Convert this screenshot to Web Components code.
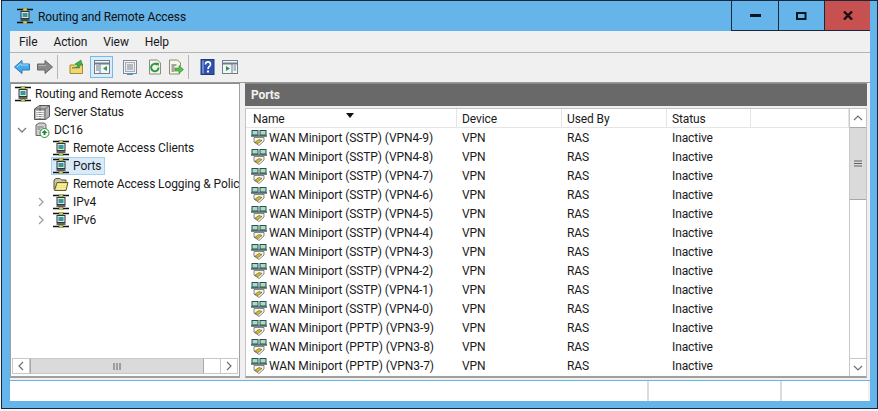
<!DOCTYPE html>
<html><head><meta charset="utf-8"><title>Routing and Remote Access</title>
<style>
html,body{margin:0;height:411px;overflow:hidden;background:#f4f4f4;font:12px/16px Roboto,"Noto Sans",sans-serif;letter-spacing:-.1px;color:#1a1a1a}
</style></head><body>
<app-window>
  <title-bar slot="title">Routing and Remote Access</title-bar>
  <menu-bar></menu-bar>
  <tool-bar></tool-bar>
  <main-area></main-area>
  <status-bar></status-bar>
</app-window>
<script>
const ICONS={
net:`<path d="M0 1.5h16M0 14.5h16" stroke="#111" stroke-width="1.4"/><rect x="6" y="0" width="4" height="3" fill="#c9d84a" stroke="#556"  stroke-width=".5"/><rect x="6" y="13" width="4" height="3" fill="#c9d84a" stroke="#556" stroke-width=".5"/><rect x="4" y="3.500" width="8" height="7" fill="#dfe5e5" stroke="#333" stroke-width="1"/><rect x="5.500" y="5" width="5" height="4" fill="#2f9c9c"/><path d="M3.500 12h9" stroke="#333" stroke-width="1.500"/>`,
wan:`<rect x="1" y="0.500" width="6" height="4.500" fill="#a7dcc8" stroke="#2c4f4f"/><rect x="9" y="0.500" width="6" height="4.500" fill="#a7dcc8" stroke="#2c4f4f"/><path d="M0 6h16" stroke="#26484a" stroke-width="1.300"/><path d="M3 7.500h10v3.500l-5 4.500-5-3.500z" fill="#f4f4ea" stroke="#555" stroke-width=".7"/><path d="M3.500 12.500l4.500-3 3 1-4 3z" fill="#d6bf2f" stroke="#5c5520" stroke-width=".6"/>`,
server:`<path d="M.5 5l5-3.500h10v11l-4 3H.5z" fill="#b4b4b4" stroke="#555"/><path d="M6 1.500v14M11 5v10.500M.5 5h10.500l4.500-3.500" fill="none" stroke="#555" stroke-width=".8"/><path d="M2 7.500h8M2 9.500h8M2 11.500h8M2 13.500h8" stroke="#f4f4f4"/>`,
dc:`<path d="M2 3l3-2h5l2 1.500v5H7.500v6H2z" fill="#cfcfcf" stroke="#666"/><path d="M3.500 5h6M3.500 7h3" stroke="#777"/><circle cx="10.500" cy="11" r="4.500" fill="#fff" stroke="#2e8b3d"/><path d="M10.500 8l3 3h-2v2h-2v-2h-2z" fill="#1e8a33"/>`,
folder:`<path d="M1 13.500V4l2-1.500h4L8.500 4H13v2" fill="#c9c8a8" stroke="#55533a"/><path d="M1.500 14.500l2.500-8h11l-2 8z" fill="#ecdf6c" stroke="#5f5c34"/><path d="M4.500 8.500h9M4 10.500h9M3.500 12.500h9" stroke="#f7f2b0"/>`,
back:`<path d="M0.500 8L8 1.500V5h7.500v6H8v3.500z" fill="#47a9e8" stroke="#2a78b6"/><path d="M3 8l4-3.500V6h7.500" fill="none" stroke="#a5dcfa"/>`,
fwd:`<path d="M15.500 8L8 1.500V5H0.500v6H8v3.500z" fill="#8a8a8a" stroke="#666"/><path d="M1.500 6.500H9" stroke="#b5b5b5"/>`,
up:`<path d="M1 14.500V6h5l1-1h6.500v9.500z" fill="#f2d673" stroke="#a68b34"/><path d="M3 9l5-1 .5-2.500L6 5l6-4 1.500 5.500L11 6 10.500 9z" fill="#3fae49" stroke="#27792f" stroke-width=".5"/>`,
tree:`<rect x="0.500" y="1.500" width="15" height="13" fill="#f4f6f8" stroke="#6e7f8c"/><path d="M1 4.500h14" stroke="#6e7f8c" stroke-width="2"/><path d="M6 5v9" stroke="#6e7f8c"/><path d="M2 7h3M2 9h3M2 11h3" stroke="#6e7f8c"/><path d="M13 7v5l-4-2.500z" fill="#2a9a4a"/>`,
props:`<rect x="1.500" y="1.500" width="13" height="13" fill="#f4f4f4" stroke="#7c8b96"/><rect x="3.500" y="3.500" width="9" height="9" fill="#e8ecee" stroke="#aab"/><path d="M5 6h6M5 8h6M5 10h6" stroke="#7c8b96"/><path d="M5 15.500h6" stroke="#3aa0d8"/>`,
refresh:`<path d="M2.500 1h8l3 3v11h-11z" fill="#f5f5f0" stroke="#8c8c80"/><path d="M11.500 8.500a3.700 3.700 0 1 1-1.200-2.700" fill="none" stroke="#2c9a3c" stroke-width="2"/><path d="M8.500 3.500l3.500.5-.5 3.500z" fill="#2c9a3c"/>`,
export:`<path d="M1.500 1h8l3 3v3h-1v8h-10z" fill="#f7f6ea" stroke="#8c8c70"/><path d="M3.500 6h5M3.500 8h3M3.500 10h3M3.500 12h3" stroke="#555"/><path d="M7 9h4V6.500L15.500 10.500 11 14.500V12H7z" fill="#52c04a" stroke="#2f8a2c" stroke-width=".6"/>`,
help:`<rect x="1" y="0.500" width="13" height="15" fill="#3052a8" stroke="#1f3a80"/><rect x="2" y="1.500" width="2" height="13" fill="#6c88cf"/><path d="M5.500 5.500c0-3.500 5-3.500 5 0 0 2-2.500 2-2.500 4.500" fill="none" stroke="#fff" stroke-width="1.600"/><rect x="7" y="11.500" width="2" height="2" fill="#fff"/>`,
action:`<rect x="0.500" y="1.500" width="15" height="13" fill="#f4f6f8" stroke="#6e7f8c"/><path d="M1 4.500h14" stroke="#6e7f8c" stroke-width="2"/><path d="M10 5v9" stroke="#6e7f8c"/><path d="M11.500 7h2.500M11.500 9h2.500M11.500 11h2.500" stroke="#6e7f8c"/><path d="M4 7v5l4-2.500z" fill="#2a9a4a"/>`
};

function def(name,css,html,init){
  customElements.define(name,class extends HTMLElement{
    constructor(){super();this.attachShadow({mode:'open'}).innerHTML=`<style>${css}</style>`+(typeof html==='function'?html(this):html);}
    connectedCallback(){init&&init(this)}
  });
}
def('app-icon',':host{display:inline-flex;width:16px;height:16px;flex:none}svg{display:block}','',el=>{
  el.shadowRoot.innerHTML+=`<svg width="16" height="16" viewBox="0 0 16 16">${ICONS[el.getAttribute('name')]}</svg>`;
});
def('app-window',`:host{display:flex;flex-direction:column;box-sizing:border-box;margin-left:1px;width:877px;height:409px;border:1px solid #17273d;background:#65b5ea;padding:0 7px 7px 8px}`,'<slot name="title"></slot><slot></slot>');
def('title-bar',`:host{display:flex;height:30px;flex:none;align-items:center;padding-left:7px}
.t{margin-left:5px;color:#101010;padding-top:1px}
.btns{margin-left:auto;display:flex;align-self:stretch;box-sizing:border-box;height:30px;border-bottom:1px solid #17273d}
.b{width:46px;display:flex;align-items:center;justify-content:center;border-left:1px solid #17273d;box-sizing:border-box}
.c{background:#c75050}
.b svg{display:block}`,`<app-icon name="net"></app-icon><span class="t"><slot></slot></span><div class="btns"><div class="b" style="width:47px"><svg width="12" height="4"><rect x="1" width="11" height="3" fill="#0b1526"/></svg></div><div class="b"><svg width="11" height="8"><rect x="1" y="1" width="8.500" height="6" fill="none" stroke="#0b1526" stroke-width="2"/></svg></div><div class="b c"><svg width="10" height="9" viewBox="0 0 10 9"><path d="M1 .5l8 8M9 .5l-8 8" stroke="#1a0d0d" stroke-width="2.400"/></svg></div></div>`);
def('menu-bar',`:host{display:flex;height:22px;flex:none;box-sizing:border-box;background:#f0f0f0;border-bottom:1px solid #b4b4b4;padding:1px 0 0 9px;gap:16px;align-items:center}`,`<span>File</span><span>Action</span><span>View</span><span>Help</span>`);
def('tool-bar',`:host{display:flex;height:30px;flex:none;box-sizing:border-box;background:#f0f0f0;align-items:center;padding:0 0 1px 4px;border-bottom:1px solid #9a9a9a}
app-icon{margin-right:7px}
.sep{width:1px;height:24px;background:#b6b6b6;margin:0 11px 0 -3px}
.sel{display:flex;align-items:center;justify-content:center;box-sizing:border-box;width:23px;height:22px;border:1px solid #75b9ea;background:#dcecf8;margin:0 9px 0 -3px}
.sel app-icon{margin:0}`,`<app-icon name="back"></app-icon><app-icon name="fwd"></app-icon><div class="sep"></div><app-icon name="up" style="margin-right:8px"></app-icon><div class="sel"><app-icon name="tree"></app-icon></div><app-icon name="props" style="margin-right:9px"></app-icon><app-icon name="refresh" style="margin-right:5px"></app-icon><app-icon name="export" style="margin-right:7px"></app-icon><div class="sep"></div><app-icon name="help" style="margin-right:6px"></app-icon><app-icon name="action"></app-icon>`);
def('main-area',`:host{display:flex;gap:5px;height:297px;flex:none;background:#f0f0f0;box-sizing:border-box}`,`<tree-pane></tree-pane><list-pane></list-pane>`);
def('tree-row',`:host{display:flex;align-items:center;height:18px;white-space:nowrap}
.ch{width:10px;height:10px;flex:none;margin-right:7px}
.lbl{margin-left:4px}
:host([sel]) .wrap{background:#d9ebf9;outline:1px solid #a9cfee;outline-offset:-1px}
.wrap{display:flex;align-items:center;height:18px;padding-right:4px;margin-left:-2px;padding-left:2px}`,el=>{
  const d=+el.getAttribute('depth')*19, c=el.getAttribute('chev');
  const ch=c==='down'?'<path d="M1 3l4 4 4-4" fill="none" stroke="#7d7d7d" stroke-width="1.300"/>':c==='right'?'<path d="M3 1l4 4-4 4" fill="none" stroke="#a0a0a0" stroke-width="1.300"/>':'';
  return `<div style="width:${d}px;flex:none"></div><svg class="ch" viewBox="0 0 10 10" style="${c?'':'visibility:hidden'}">${ch}</svg><div class="wrap"><app-icon name="${el.getAttribute('icon')}"></app-icon><span class="lbl"><slot></slot></span></div>`;
});
def('h-scroll',`:host{display:flex;height:16px;flex:none;margin:0 1px 2px 1px;background:#fff;border:1px solid #c8c8c8;box-sizing:border-box}
.b{width:17px;display:flex;align-items:center;justify-content:center;box-sizing:border-box;background:#fff}
.t{flex:1;display:flex;align-items:center;justify-content:center;background:#dadada;border:1px solid #a8a8a8;border-width:0 1px}
.r{width:16px;background:#fff}.bl{border-left:1px solid #c8c8c8}`,`<div class="b" style="border-right:1px solid #c8c8c8"><svg width="8" height="10"><path d="M6 1L2 5l4 4" fill="none" stroke="#707070" stroke-width="1.200"/></svg></div><div class="t"><svg width="8" height="7"><path d="M1 0v7M4 0v7M7 0v7" stroke="#606060"/></svg></div><div class="r"></div><div class="b bl"><svg width="8" height="10"><path d="M2 1l4 4-4 4" fill="none" stroke="#707070" stroke-width="1.200"/></svg></div>`);
def('tree-pane',`:host{display:flex;flex-direction:column;width:230px;height:295px;box-sizing:border-box;background:#fff;border:1px solid #a0a0a0;border-width:1px 1px 2px 1px;flex:none;border-top-color:#8a8a8a}
.l{flex:1;padding-top:1px;padding-left:1px;overflow:hidden;margin-left:-6px}`,`<div class="l">
<tree-row depth="0" icon="net" style="margin-left:-8px">Routing and Remote Access</tree-row>
<tree-row depth="1" icon="server" style="margin-left:-8px">Server Status</tree-row>
<tree-row depth="0" chev="down" icon="dc" style="margin-left:11px">DC16</tree-row>
<tree-row depth="2" icon="net" style="margin-left:-8px">Remote Access Clients</tree-row>
<tree-row depth="2" icon="net" sel style="margin-left:-8px">Ports</tree-row>
<tree-row depth="2" icon="folder" style="margin-left:-8px">Remote Access Logging &amp; Policies</tree-row>
<tree-row depth="1" chev="right" icon="net" style="margin-left:11px">IPv4</tree-row>
<tree-row depth="1" chev="right" icon="net" style="margin-left:11px">IPv6</tree-row>
</div><h-scroll></h-scroll>`);
const COLS='211px 105px 105px 84px 1fr';
def('list-row',`:host{display:grid;grid-template-columns:${COLS};height:19px;align-items:center;white-space:nowrap}
.n{display:flex;align-items:center;padding-left:5px;gap:2px}.c{padding-left:5px}`,el=>`<div class="n"><app-icon name="wan"></app-icon><span>${el.getAttribute('n')||''}</span></div>`+(el.hasAttribute('n')?`<div class="c">VPN</div><div class="c">RAS</div><div class="c">Inactive</div>`:''));
def('list-pane',`:host{display:flex;flex-direction:column;width:622px;height:295px;flex:none;box-sizing:border-box}
.h{height:23px;background:#696969;color:#f2f2f2;font-weight:700;display:flex;align-items:center;padding:0 0 1px 6px;box-sizing:border-box;flex:none;border-top:1px solid #8a8a8a}
.body{flex:1;min-height:0;margin-top:2px;display:flex;background:#fff;border:1px solid #c4c4c4;border-bottom:2px solid #a0a0a0;box-sizing:border-box}
.main{flex:1;min-width:0;overflow:hidden;display:flex;flex-direction:column}
.cols{display:grid;grid-template-columns:${COLS};height:19px;box-sizing:border-box;flex:none;align-items:center;border-bottom:1px solid #e5e5e5;position:relative}
.cols div{padding-left:5px;border-right:1px solid #e5e5e5;height:18px;line-height:20px}
.cols div:first-child{padding-left:7px}.cols div:last-child{border:0}
.arrow{position:absolute;left:100px;top:4px;width:0;height:0;border:4px solid transparent;border-top:5px solid #111;border-bottom:0}
.rows{overflow:hidden;flex:1;min-height:0}
.vs{width:17px;flex:none;display:flex;flex-direction:column;border-left:1px solid #c8c8c8;box-sizing:border-box}
.vs .b{height:18px;display:flex;align-items:center;justify-content:center;flex:none}
.vs .th{height:73px;flex:none;background:#dadada;border:1px solid #a8a8a8;border-width:1px 0;box-sizing:border-box;display:flex;align-items:center;justify-content:center}
.vs .sp{flex:1}
.vs .dn{height:17px;border:1px solid #c8c8c8;border-width:1px 0 0 0}`,`<div class="h">Ports</div><div class="body"><div class="main"><div class="cols"><div>Name</div><div>Device</div><div>Used By</div><div>Status</div><div></div><span class="arrow"></span></div><div class="rows" id="r"></div></div><div class="vs"><div class="b"><svg width="10" height="8"><path d="M1 6l4-4 4 4" fill="none" stroke="#707070" stroke-width="1.200"/></svg></div><div class="th"><svg width="8" height="7"><path d="M0 1h8M0 3.500h8M0 6h8" stroke="#606060"/></svg></div><div class="sp"></div><div class="b dn"><svg width="10" height="8"><path d="M1 2l4 4 4-4" fill="none" stroke="#707070" stroke-width="1.200"/></svg></div></div></div>`,el=>{
  const names=[];for(let i=9;i>=0;i--)names.push(`WAN Miniport (SSTP) (VPN4-${i})`);
  for(const i of [9,8,7])names.push(`WAN Miniport (PPTP) (VPN3-${i})`);
  el.shadowRoot.getElementById('r').innerHTML=names.map(n=>`<list-row n="${n}"></list-row>`).join('')+'<list-row></list-row>';
});
def('status-bar',`:host{display:grid;grid-template-columns:639px 133px 1fr;height:20px;flex:none;background:#f0f0f0;margin-top:1px;padding-right:2px;box-sizing:border-box}
div{background:#fff;box-sizing:border-box;border-right:2px solid #dcdcdc}div:last-child{border:0}`,`<div></div><div></div><div></div>`);
</script>
</body></html>
